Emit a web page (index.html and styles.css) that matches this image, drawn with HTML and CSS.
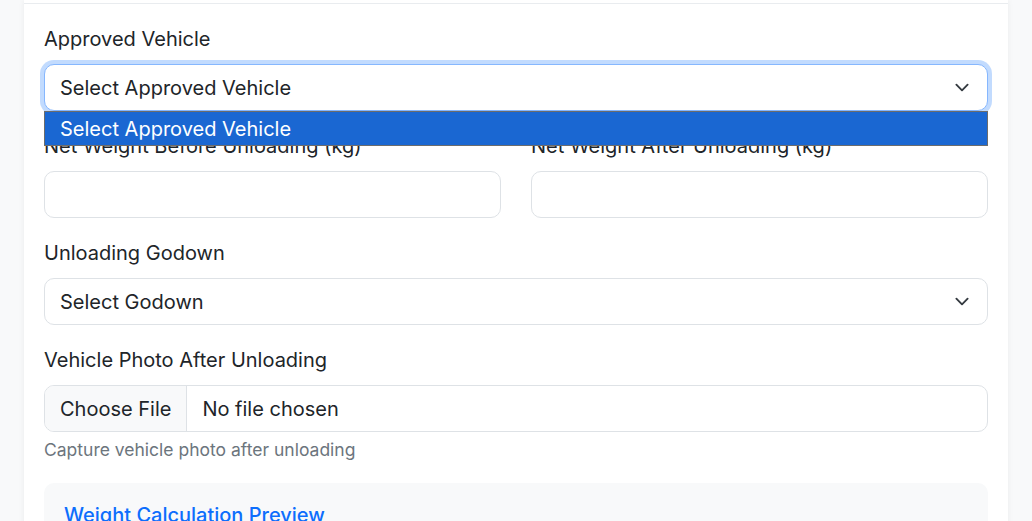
FILE: index.html
```html
<!DOCTYPE html>
<html lang="en">
<head>
<meta charset="utf-8">
<title>Unloading</title>
<link rel="stylesheet" href="styles.css">
</head>
<body>
<div class="page">
  <div class="card">
    <div class="card-header"></div>
    <div class="card-body">
      <div class="field">
        <label class="form-label">Approved Vehicle</label>
        <div class="select-wrap">
          <div class="form-select is-focused">Select Approved Vehicle</div>
          <div class="select-popup">
            <div class="popup-option">Select Approved Vehicle</div>
          </div>
        </div>
      </div>
      <div class="row">
        <div class="field">
          <label class="form-label">Net Weight Before Unloading (kg)</label>
          <div class="form-control"></div>
        </div>
        <div class="field">
          <label class="form-label">Net Weight After Unloading (kg)</label>
          <div class="form-control"></div>
        </div>
      </div>
      <div class="field">
        <label class="form-label">Unloading Godown</label>
        <div class="form-select">Select Godown</div>
      </div>
      <div class="field">
        <label class="form-label">Vehicle Photo After Unloading</label>
        <div class="file-input">
          <span class="file-btn">Choose File</span>
          <span class="file-name">No file chosen</span>
        </div>
        <div class="form-text">Capture vehicle photo after unloading</div>
      </div>
      <div class="preview">
        <h6 class="preview-title">Weight Calculation Preview</h6>
      </div>
    </div>
  </div>
</div>
</body>
</html>
```
FILE: styles.css
```css
* { box-sizing: border-box; }
html, body { margin: 0; padding: 0; }
body {
  background: #f8f9fa;
  font-family: Inter, "Noto Sans", "Liberation Sans", sans-serif;
  font-size: 20px;
  line-height: 1.5;
  color: #212529;
  height: 521px;
  overflow: hidden;
}
.page { padding: 0 24px; }
.card {
  background: #fff;
  box-shadow: 0 0 6px rgba(0,0,0,0.06);
  min-height: 600px;
}
.card-header {
  height: 4px;
  border-bottom: 1px solid #e9ecef;
}
.card-body { padding: 20px 20px; }
.field { margin-bottom: 20px; }
.form-label {
  display: block;
  margin-bottom: 10px;
  line-height: 30px;
}
.row {
  display: grid;
  grid-template-columns: 1fr 1fr;
  column-gap: 30px;
}
.form-control, .form-select, .file-input {
  height: 47px;
  border: 1px solid #dee2e6;
  border-radius: 10px;
  background: #fff;
  padding: 7.5px 15px;
  line-height: 30px;
}
.form-select {
  padding-right: 50px;
  background-image: url("data:image/svg+xml,%3csvg xmlns='http://www.w3.org/2000/svg' viewBox='0 0 16 16'%3e%3cpath fill='none' stroke='%23343a40' stroke-linecap='round' stroke-linejoin='round' stroke-width='2' d='m2 5 6 6 6-6'/%3e%3c/svg%3e");
  background-repeat: no-repeat;
  background-position: right 15px center;
  background-size: 20px 15px;
}
.form-select.is-focused {
  border-color: #86b7fe;
  box-shadow: 0 0 0 4px rgba(13,110,253,0.25);
}
.select-wrap { position: relative; }
.select-popup {
  position: absolute;
  left: 0;
  right: 0;
  top: 47px;
  height: 35px;
  border: 1px solid #6c6c6c;
  background: #1a67d2;
  z-index: 5;
}
.popup-option {
  color: #fff;
  padding: 1px 15px 0;
  line-height: 33px;
}
.file-input {
  display: flex;
  padding: 0;
  overflow: hidden;
}
.file-btn {
  background: #f8f9fa;
  border-right: 1px solid #dee2e6;
  padding: 7.5px 15px;
}
.file-name { padding: 7.5px 15px; }
.form-text {
  margin-top: 5px;
  font-size: 17.5px;
  line-height: 26px;
  color: #6c757d;
}
.preview {
  background: #f8f9fa;
  border-radius: 10px;
  padding: 20px;
  min-height: 120px;
}
.preview-title {
  margin: 0;
  font-size: 20px;
  font-weight: 500;
  line-height: 1.2;
  color: #0d6efd;
}
```
